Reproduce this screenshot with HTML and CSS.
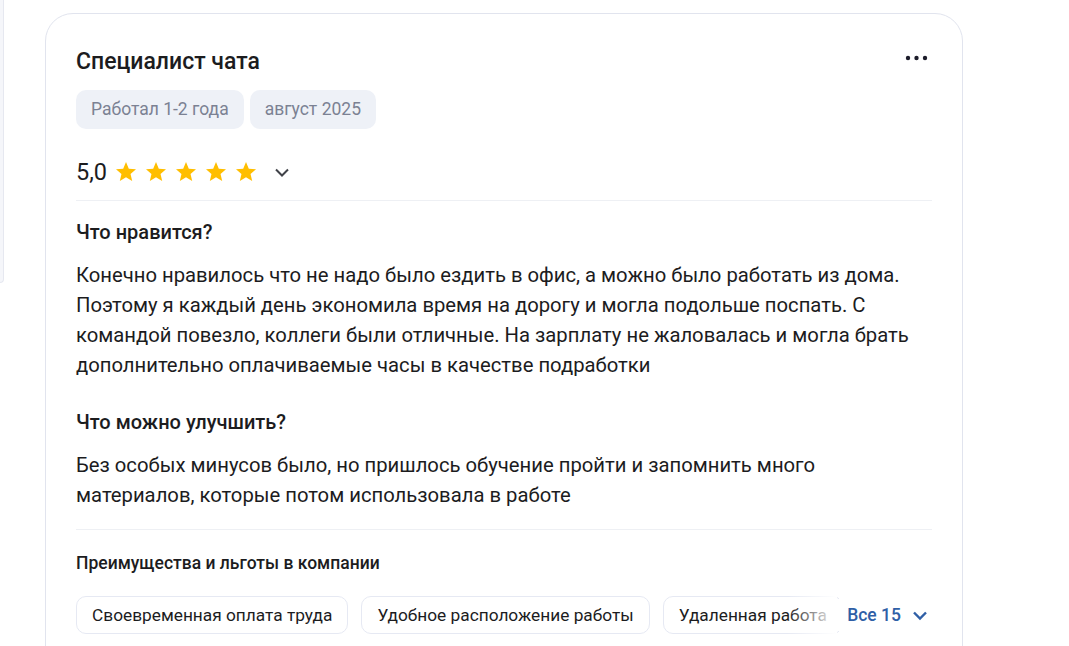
FILE: index.html
```html
<!DOCTYPE html>
<html lang="ru">
  <head>
    <meta charset="UTF-8" />
    <meta name="viewport" content="width=device-width, initial-scale=1.0" />
    <title>Отзыв</title>
    <link rel="stylesheet" href="styles.css">
  </head>
  <body>
    <div class="page">
      <div class="side"></div>
      <div class="card">
        <div class="head">
          <h2 class="title">Специалист чата</h2>
          <svg class="more" width="28" height="24" viewBox="0 0 28 24">
            <circle cx="4" cy="12" r="2.2" />
            <circle cx="12.5" cy="12" r="2.2" />
            <circle cx="21" cy="12" r="2.2" />
          </svg>
        </div>
        <div class="tags">
          <span class="tag">Работал 1-2 года</span>
          <span class="tag">август 2025</span>
        </div>
        <div class="rating">
          <span class="score">5,0</span>
          <div class="stars">
            <svg width="24" height="24" viewBox="0 0 24 24"><path d="M12 17.27L18.18 21l-1.64-7.03L22 9.24l-7.19-.61L12 2 9.19 8.63 2 9.24l5.46 4.73L5.82 21z" /></svg>
            <svg width="24" height="24" viewBox="0 0 24 24"><path d="M12 17.27L18.18 21l-1.64-7.03L22 9.24l-7.19-.61L12 2 9.19 8.63 2 9.24l5.46 4.73L5.82 21z" /></svg>
            <svg width="24" height="24" viewBox="0 0 24 24"><path d="M12 17.27L18.18 21l-1.64-7.03L22 9.24l-7.19-.61L12 2 9.19 8.63 2 9.24l5.46 4.73L5.82 21z" /></svg>
            <svg width="24" height="24" viewBox="0 0 24 24"><path d="M12 17.27L18.18 21l-1.64-7.03L22 9.24l-7.19-.61L12 2 9.19 8.63 2 9.24l5.46 4.73L5.82 21z" /></svg>
            <svg width="24" height="24" viewBox="0 0 24 24"><path d="M12 17.27L18.18 21l-1.64-7.03L22 9.24l-7.19-.61L12 2 9.19 8.63 2 9.24l5.46 4.73L5.82 21z" /></svg>
          </div>
          <svg class="chev" width="24" height="24" viewBox="0 0 24 24"><path d="M6 9.5l6 6 6-6" /></svg>
        </div>
        <div class="line"></div>
        <h3 class="sub">Что нравится?</h3>
        <p class="text">Конечно нравилось что не надо было ездить в офис, а можно было работать из дома. Поэтому я каждый день экономила время на дорогу и могла подольше поспать. С командой повезло, коллеги были отличные. На зарплату не жаловалась и могла брать дополнительно оплачиваемые часы в качестве подработки</p>
        <h3 class="sub sub-next">Что можно улучшить?</h3>
        <p class="text">Без особых минусов было, но пришлось обучение пройти и запомнить много материалов, которые потом использовала в работе</p>
        <div class="line line-low"></div>
        <h4 class="perks-title">Преимущества и льготы в компании</h4>
        <div class="perks">
          <div class="chips">
            <span class="chip">Своевременная оплата труда</span>
            <span class="chip">Удобное расположение работы</span>
            <span class="chip">Удаленная работа</span>
          </div>
          <div class="fade"></div>
          <a class="all" href="javascript:">Все 15
            <svg width="24" height="24" viewBox="0 0 24 24"><path d="M6 9.5l6 6 6-6" /></svg>
          </a>
        </div>
      </div>
    </div>
  </body>
</html>
```

FILE: styles.css
```css
* {
  margin: 0;
  padding: 0;
  box-sizing: border-box;
}
body {
  background: #fff;
  font-family: Roboto, "Noto Sans", Arial, sans-serif;
  color: #1c1c1e;
  overflow: hidden;
}
.page {
  display: flex;
  align-items: flex-start;
}
.side {
  width: 4px;
  height: 283px;
  background: #f5f6fa;
  border-right: 1px solid #e6e8f0;
  border-bottom: 1px solid #e6e8f0;
  border-bottom-right-radius: 10px;
}
.card {
  width: 918px;
  margin: 13px 0 0 41px;
  padding: 34px 30px 40px;
  border: 1px solid #e1e4ee;
  border-radius: 28px;
}
.head {
  display: flex;
  justify-content: space-between;
  align-items: flex-start;
}
.title {
  font-size: 23px;
  line-height: 28px;
  font-weight: 500;
}
.more {
  margin-top: -2px;
  fill: #1c1c2a;
}
.tags {
  display: flex;
  gap: 6px;
  margin-top: 14px;
}
.tag {
  height: 39px;
  line-height: 39px;
  padding: 0 15px;
  border-radius: 10px;
  background: #eef1f7;
  color: #7b8193;
  font-size: 17.5px;
}
.rating {
  display: flex;
  align-items: center;
  height: 30px;
  margin-top: 28px;
}
.score {
  font-size: 23.5px;
  margin-right: 7px;
}
.stars {
  display: flex;
  gap: 6px;
}
.stars svg {
  fill: #ffbe00;
}
.chev {
  margin-left: 12px;
  fill: none;
  stroke: #404248;
  stroke-width: 2;
}
.line {
  height: 1px;
  background: #eef0f4;
  margin-top: 13px;
}
.sub {
  font-size: 20px;
  line-height: 24px;
  font-weight: 500;
  margin-top: 19px;
}
.sub-next {
  margin-top: 30px;
}
.text {
  font-size: 20.25px;
  line-height: 30px;
  margin-top: 16px;
}
.line-low {
  margin-top: 19px;
}
.perks-title {
  font-size: 17.5px;
  line-height: 22px;
  font-weight: 500;
  margin-top: 22px;
}
.perks {
  position: relative;
  display: flex;
  align-items: center;
  margin-top: 22px;
}
.chips {
  flex: 1;
  display: flex;
  gap: 13px;
  overflow: hidden;
}
.chip {
  flex-shrink: 0;
  height: 38px;
  line-height: 36px;
  padding: 0 15px;
  border: 1px solid #e6e9f3;
  border-radius: 10px;
  font-size: 17.3px;
  white-space: nowrap;
}
.fade {
  position: absolute;
  top: 0;
  right: 95px;
  width: 50px;
  height: 38px;
  background: linear-gradient(to right, rgba(255, 255, 255, 0), #fff);
}
.all {
  display: flex;
  align-items: center;
  gap: 7px;
  padding-left: 8px;
  color: #2f5fa6;
  font-size: 17.5px;
  font-weight: 500;
  text-decoration: none;
  white-space: nowrap;
}
.all svg {
  fill: none;
  stroke: #2f5fa6;
  stroke-width: 2.4;
}
```
